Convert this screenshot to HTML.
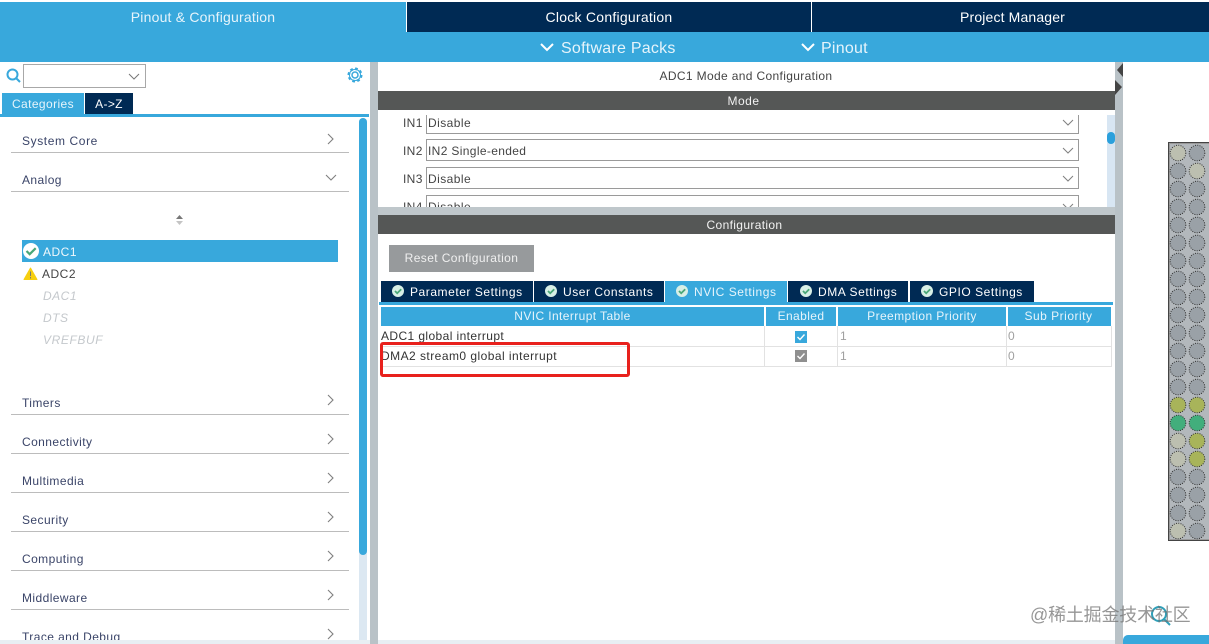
<!DOCTYPE html>
<html><head><meta charset="utf-8">
<style>
html,body{margin:0;padding:0;background:#fff;}
#p{position:relative;width:1209px;height:644px;overflow:hidden;background:#fff;font-family:"Liberation Sans","Noto Sans CJK SC",sans-serif;font-size:12px;}
#p div{position:absolute;}
.t{white-space:nowrap;line-height:16px;height:16px;letter-spacing:.35px;}
.c{text-align:center;}
.cat{left:22px;color:#3a4468;font-size:12px;letter-spacing:.42px;}
.ln{left:11px;width:338px;height:1px;background:#bcbcbc;}
.tab{top:281px;height:21px;background:#002a54;}
.tt{top:284px;color:#fff;letter-spacing:.55px;}
.hd{top:307px;height:19px;background:#38a8dc;}
.ht{top:308px;color:#e6f4fb;letter-spacing:.4px;}
svg{position:absolute;overflow:visible;}
</style></head><body><div id="p">

<div style="left:0;top:2px;width:1209px;height:60px;background:#38a8dc"></div>
<div style="left:407px;top:2px;width:802px;height:30px;background:#002a54"></div>
<div style="left:406px;top:2px;width:1px;height:30px;background:#fff"></div>
<div style="left:811px;top:2px;width:1px;height:30px;background:#fff"></div>
<div class="t c" style="left:0;width:406px;top:9px;color:#e6f4fb;font-size:14px;letter-spacing:.2px">Pinout &amp; Configuration</div>
<div class="t c" style="left:407px;width:404px;top:9px;color:#fff;font-size:14px;letter-spacing:.25px">Clock Configuration</div>
<div class="t c" style="left:814px;width:397px;top:9px;color:#fff;font-size:14px;letter-spacing:.15px">Project Manager</div>
<svg style="left:0;top:0" width="1209" height="62" fill="none" stroke="#fff" stroke-width="2"><path d="M541 44l6 6 6-6M802 44l6 6 6-6"/></svg>
<div class="t" style="left:561px;top:41px;color:#e6f4fb;font-size:16px;letter-spacing:.25px">Software Packs</div>
<div class="t" style="left:821px;top:41px;color:#e6f4fb;font-size:16px;letter-spacing:.25px">Pinout</div>

<svg style="left:0;top:0" width="370" height="120" fill="none">
<circle cx="12.5" cy="74.5" r="5" stroke="#38a8dc" stroke-width="2"/><path d="M16 78l4 4" stroke="#38a8dc" stroke-width="2"/>
<path d="M129 74l5 5 5-5" stroke="#777"/>
<circle cx="355" cy="75" r="3" stroke="#38a8dc" stroke-width="1.5"/>
<circle cx="355" cy="75" r="6.2" stroke="#38a8dc" stroke-width="2.6" stroke-dasharray="2.6 2.25"/>
<circle cx="355" cy="75" r="5.6" stroke="#38a8dc" stroke-width="1"/>
</svg>
<div style="left:23px;top:64px;width:121px;height:22px;border:1px solid #a8a8a8"></div>
<div style="left:2px;top:93px;width:82px;height:21px;background:#38a8dc"></div>
<div style="left:85px;top:93px;width:48px;height:21px;background:#002a54"></div>
<div class="t c" style="left:2px;width:82px;top:96px;color:#e6f4fb;letter-spacing:.4px">Categories</div>
<div class="t c" style="left:85px;width:48px;top:96px;color:#fff;">A-&gt;Z</div>
<div style="left:0;top:114px;width:369px;height:3px;background:#38a8dc"></div>

<div style="left:359px;top:118px;width:8px;height:522px;background:#dce8f2;border-radius:4px 4px 0 0"></div>
<div style="left:359px;top:118px;width:8px;height:437px;background:#38a8dc;border-radius:4px"></div>

<div class="t cat" style="top:133px;letter-spacing:.6px">System Core</div><div class="ln" style="top:152px"></div>
<div class="t cat" style="top:172px">Analog</div><div class="ln" style="top:191px"></div>
<div class="t cat" style="top:395px">Timers</div><div class="ln" style="top:414px"></div>
<div class="t cat" style="top:434px">Connectivity</div><div class="ln" style="top:453px"></div>
<div class="t cat" style="top:473px">Multimedia</div><div class="ln" style="top:492px"></div>
<div class="t cat" style="top:512px">Security</div><div class="ln" style="top:531px"></div>
<div class="t cat" style="top:551px">Computing</div><div class="ln" style="top:570px"></div>
<div class="t cat" style="top:590px">Middleware</div><div class="ln" style="top:609px"></div>
<div class="t cat" style="top:629px">Trace and Debug</div>

<svg style="left:0;top:0" width="370" height="644" fill="none" stroke="#808080" stroke-width="1.1">
<path d="M328 134l5 5-5 5M326 175l5 5 5-5M328 395l5 5-5 5M328 434l5 5-5 5M328 473l5 5-5 5M328 512l5 5-5 5M328 551l5 5-5 5M328 590l5 5-5 5M328 629l5 5-5 5"/>
<path d="M176 219l3.500-4 3.500 4z" fill="#777" stroke="none"/><path d="M176 221l3.500 4 3.500-4z" fill="#c4c4c4" stroke="none"/>
</svg>

<div style="left:22px;top:240px;width:316px;height:22px;background:#38a8dc"></div>
<svg style="left:22px;top:242px" width="18" height="18" fill="none"><circle cx="9" cy="9" r="8" fill="#fff"/><path d="M4.500 9l3.200 3.200 6-6" stroke="#4aa878" stroke-width="2.200"/></svg>
<div class="t" style="left:43px;top:244px;color:#f0f8fc;letter-spacing:.5px">ADC1</div>
<svg style="left:23px;top:267px" width="15" height="13"><path d="M7.500 1L14 12.500H1z" fill="#f6cf10" stroke="#f6cf10" stroke-linejoin="round"/><path d="M7.500 4.500v4.500M7.500 10v1.500" stroke="#777" stroke-width="1"/></svg>
<div class="t" style="left:42px;top:266px;color:#444;letter-spacing:.5px">ADC2</div>
<div class="t" style="left:43px;top:288px;color:#c4c8cc;font-style:italic;letter-spacing:.5px">DAC1</div>
<div class="t" style="left:43px;top:310px;color:#c4c8cc;font-style:italic;letter-spacing:.5px">DTS</div>
<div class="t" style="left:43px;top:332px;color:#c4c8cc;font-style:italic;letter-spacing:.6px">VREFBUF</div>

<div style="left:0;top:640px;width:370px;height:4px;background:#e8eef3"></div>
<div style="left:378px;top:640px;width:737px;height:4px;background:#e8eef3"></div>
<div style="left:370px;top:62px;width:8px;height:582px;background:#b9c2c7"></div>
<div style="left:1115px;top:62px;width:8px;height:582px;background:#b9c2c7"></div>
<svg style="left:1115px;top:62px" width="8" height="36"><path d="M8 1L2 8l6 7zM0 18l7 7-7 8z" fill="#444"/></svg>

<div class="t c" style="left:378px;width:736px;top:68px;color:#444">ADC1 Mode and Configuration</div>
<div style="left:378px;top:91px;width:737px;height:19px;background:#555756"></div>
<div class="t c" style="left:375px;width:737px;top:93px;color:#f2f2f2;letter-spacing:.5px">Mode</div>

<div style="left:378px;top:110px;width:729px;height:97px;overflow:hidden">
<div style="left:48px;top:5px;width:651px;height:18px;border:1px solid #9a9a9a;border-top:0"></div>
<div style="left:48px;top:29px;width:651px;height:20px;border:1px solid #9a9a9a"></div>
<div style="left:48px;top:57px;width:651px;height:20px;border:1px solid #9a9a9a"></div>
<div style="left:48px;top:85px;width:651px;height:20px;border:1px solid #9a9a9a"></div>
<div class="t" style="left:25px;top:5px;color:#444">IN1</div><div class="t" style="left:50px;top:5px;color:#444;letter-spacing:.45px">Disable</div>
<div class="t" style="left:25px;top:33px;color:#444">IN2</div><div class="t" style="left:50px;top:33px;color:#444">IN2 Single-ended</div>
<div class="t" style="left:25px;top:61px;color:#444">IN3</div><div class="t" style="left:50px;top:61px;color:#444;letter-spacing:.45px">Disable</div>
<div class="t" style="left:25px;top:89px;color:#444">IN4</div><div class="t" style="left:50px;top:89px;color:#444;letter-spacing:.45px">Disable</div>
<svg style="left:0;top:0" width="729" height="97" fill="none" stroke="#808080"><path d="M685 10l5 5 5-5M685 38l5 5 5-5M685 66l5 5 5-5M685 94l5 5 5-5"/></svg>
</div>
<div style="left:1107px;top:115px;width:8px;height:92px;background:#d8e6f3"></div>
<div style="left:1107px;top:132px;width:8px;height:12px;background:#2ba0dc;border-radius:4px"></div>

<div style="left:378px;top:207px;width:737px;height:8px;background:#bfc7cb"></div>
<div style="left:378px;top:215px;width:737px;height:19px;background:#555756"></div>
<div class="t c" style="left:376px;width:737px;top:217px;color:#f2f2f2">Configuration</div>

<div style="left:389px;top:245px;width:145px;height:27px;background:#979a9c"></div>
<div class="t c" style="left:389px;width:145px;top:250px;color:#f0f0f0;letter-spacing:.4px">Reset Configuration</div>

<div class="tab" style="left:381px;width:152px"></div>
<div class="tab" style="left:534px;width:130px"></div>
<div class="tab" style="left:665px;width:122px;background:#38a8dc"></div>
<div class="tab" style="left:788px;width:120px"></div>
<div class="tab" style="left:910px;width:124px"></div>
<svg style="left:0;top:0" width="1209" height="320">
<g fill="#d8efe6"><circle cx="398" cy="291" r="6"/><circle cx="551" cy="291" r="6"/><circle cx="682" cy="291" r="6"/><circle cx="806" cy="291" r="6"/><circle cx="927" cy="291" r="6"/></g>
<g fill="none" stroke="#4aa878" stroke-width="1.800"><path d="M395 291l2.200 2.200 4-4M548 291l2.200 2.200 4-4M679 291l2.200 2.200 4-4M803 291l2.200 2.200 4-4M924 291l2.200 2.200 4-4"/></g>
</svg>
<div class="t tt" style="left:410px">Parameter Settings</div>
<div class="t tt" style="left:563px">User Constants</div>
<div class="t tt" style="left:694px;color:#e6f4fb">NVIC Settings</div>
<div class="t tt" style="left:818px">DMA Settings</div>
<div class="t tt" style="left:939px">GPIO Settings</div>
<div style="left:379px;top:302px;width:734px;height:3px;background:#38a8dc"></div>

<div class="hd" style="left:381px;width:383px"></div>
<div class="hd" style="left:766px;width:70px"></div>
<div class="hd" style="left:838px;width:168px"></div>
<div class="hd" style="left:1008px;width:103px"></div>
<div class="t ht c" style="left:381px;width:383px">NVIC Interrupt Table</div>
<div class="t ht c" style="left:766px;width:70px">Enabled</div>
<div class="t ht c" style="left:838px;width:168px">Preemption Priority</div>
<div class="t ht c" style="left:1007px;width:103px;letter-spacing:.5px">Sub Priority</div>

<div style="left:381px;top:346px;width:731px;height:1px;background:#e2e2e2"></div>
<div style="left:381px;top:366px;width:731px;height:1px;background:#e2e2e2"></div>
<div style="left:764px;top:326px;width:1px;height:40px;background:#e2e2e2"></div>
<div style="left:837px;top:326px;width:1px;height:40px;background:#e2e2e2"></div>
<div style="left:1006px;top:326px;width:1px;height:40px;background:#e2e2e2"></div>
<div style="left:1111px;top:326px;width:1px;height:40px;background:#e2e2e2"></div>

<div class="t" style="left:381px;top:328px;color:#333;letter-spacing:.4px">ADC1 global interrupt</div>
<div class="t" style="left:381px;top:348px;color:#333;letter-spacing:.46px">DMA2 stream0 global interrupt</div>
<div class="t" style="left:840px;top:328px;color:#a0a0a0">1</div>
<div class="t" style="left:840px;top:348px;color:#a0a0a0">1</div>
<div class="t" style="left:1008px;top:328px;color:#a0a0a0">0</div>
<div class="t" style="left:1008px;top:348px;color:#a0a0a0">0</div>
<div style="left:795px;top:331px;width:12px;height:12px;background:#38a8dc"></div>
<div style="left:795px;top:350px;width:12px;height:12px;background:#8f8f8f"></div>
<svg style="left:795px;top:331px" width="12" height="32" fill="none" stroke="#fff" stroke-width="1.400"><path d="M2.500 6l2.500 2.500 4.500-5M2.500 25l2.500 2.500 4.500-5"/></svg>

<div style="left:380px;top:342px;width:244px;height:29px;border:3px solid #e8211d;border-radius:3px"></div>

<div style="left:1168px;top:142px;width:50px;height:399px;box-sizing:border-box;border:1px solid #444;border-right:0;background:#b3b8bc;outline:1px solid #999;outline-offset:-2px"></div>
<svg style="left:0;top:0" width="1209" height="644">
<defs><circle id="g" r="7.800" fill="#9aa1a7" stroke="#333" stroke-width="1" stroke-dasharray="1 1.300"/>
<circle id="b" r="7.800" fill="#bcbfb0" stroke="#333" stroke-width="1" stroke-dasharray="1 1.300"/>
<circle id="o" r="7.800" fill="#a8b45a" stroke="#333" stroke-width="1" stroke-dasharray="1 1.300"/>
<circle id="e" r="7.800" fill="#42ae7c" stroke="#333" stroke-width="1" stroke-dasharray="1 1.300"/></defs>
<use href="#b" x="1178" y="153"/><use href="#g" x="1197" y="153"/>
<use href="#g" x="1178" y="171"/><use href="#b" x="1197" y="171"/>
<use href="#g" x="1178" y="189"/><use href="#g" x="1197" y="189"/>
<use href="#g" x="1178" y="207"/><use href="#g" x="1197" y="207"/>
<use href="#g" x="1178" y="225"/><use href="#g" x="1197" y="225"/>
<use href="#g" x="1178" y="243"/><use href="#g" x="1197" y="243"/>
<use href="#g" x="1178" y="261"/><use href="#g" x="1197" y="261"/>
<use href="#g" x="1178" y="279"/><use href="#g" x="1197" y="279"/>
<use href="#g" x="1178" y="297"/><use href="#g" x="1197" y="297"/>
<use href="#g" x="1178" y="315"/><use href="#g" x="1197" y="315"/>
<use href="#g" x="1178" y="333"/><use href="#g" x="1197" y="333"/>
<use href="#g" x="1178" y="351"/><use href="#g" x="1197" y="351"/>
<use href="#g" x="1178" y="369"/><use href="#g" x="1197" y="369"/>
<use href="#g" x="1178" y="387"/><use href="#g" x="1197" y="387"/>
<use href="#o" x="1178" y="405"/><use href="#o" x="1197" y="405"/>
<use href="#e" x="1178" y="423"/><use href="#e" x="1197" y="423"/>
<use href="#b" x="1178" y="441"/><use href="#o" x="1197" y="441"/>
<use href="#b" x="1178" y="459"/><use href="#o" x="1197" y="459"/>
<use href="#g" x="1178" y="477"/><use href="#g" x="1197" y="477"/>
<use href="#g" x="1178" y="495"/><use href="#g" x="1197" y="495"/>
<use href="#g" x="1178" y="513"/><use href="#g" x="1197" y="513"/>
<use href="#b" x="1178" y="531"/><use href="#g" x="1197" y="531"/>
</svg>

<div style="left:1123px;top:635px;width:86px;height:9px;background:#38a8dc;border-radius:5px 0 0 0"></div>
<svg style="left:1150px;top:605px" width="24" height="24" fill="none" stroke="#2f9fb8" stroke-width="2"><circle cx="9" cy="9" r="7"/><path d="M14 14l6 6"/></svg>
<div class="t" style="left:1030px;top:604px;height:22px;line-height:22px;font-size:18px;letter-spacing:-.2px;color:rgba(110,110,110,.72)">@稀土掘金技术社区</div>

</div></body></html>
